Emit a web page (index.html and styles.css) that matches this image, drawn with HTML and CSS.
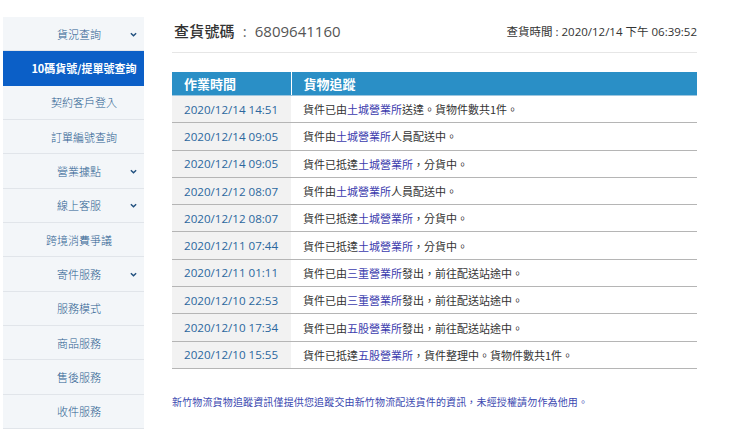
FILE: index.html
```html
<!DOCTYPE html>
<html lang="zh-Hant">
<head>
<meta charset="utf-8">
<title>貨況查詢</title>
<link rel="stylesheet" href="styles.css">
</head>
<body>
<div class="page">
  <nav class="side">
    <div class="item has-sub"><span class="label">貨況查詢</span><svg class="chev" viewBox="0 0 8 5" width="7" height="5"><path d="M1 1 L4 4 L7 1" fill="none" stroke="#1f4f7e" stroke-width="1.6"/></svg></div>
    <div class="item sub active"><span class="label">10碼貨號/提單號查詢</span></div>
    <div class="item sub"><span class="label">契約客戶登入</span></div>
    <div class="item sub"><span class="label">訂單編號查詢</span></div>
    <div class="item has-sub"><span class="label">營業據點</span><svg class="chev" viewBox="0 0 8 5" width="7" height="5"><path d="M1 1 L4 4 L7 1" fill="none" stroke="#1f4f7e" stroke-width="1.6"/></svg></div>
    <div class="item has-sub"><span class="label">線上客服</span><svg class="chev" viewBox="0 0 8 5" width="7" height="5"><path d="M1 1 L4 4 L7 1" fill="none" stroke="#1f4f7e" stroke-width="1.6"/></svg></div>
    <div class="item"><span class="label">跨境消費爭議</span></div>
    <div class="item has-sub"><span class="label">寄件服務</span><svg class="chev" viewBox="0 0 8 5" width="7" height="5"><path d="M1 1 L4 4 L7 1" fill="none" stroke="#1f4f7e" stroke-width="1.6"/></svg></div>
    <div class="item"><span class="label">服務模式</span></div>
    <div class="item"><span class="label">商品服務</span></div>
    <div class="item"><span class="label">售後服務</span></div>
    <div class="item"><span class="label">收件服務</span></div>
  </nav>

  <main class="main">
    <div class="head">
      <h1 class="title"><span class="title-label">查貨號碼</span><span class="colon">:</span><span class="number">6809641160</span></h1>
      <div class="qtime"><span class="qlabel">查貨時間</span> : 2020/12/14 下午 06:39:52</div>
    </div>

    <table class="track">
      <thead>
        <tr><th class="c-time">作業時間</th><th>貨物追蹤</th></tr>
      </thead>
      <tbody>
        <tr><td class="c-time">2020/12/14 14:51</td><td>貨件已由<a>土城營業所</a>送達。貨物件數共1件。</td></tr>
        <tr><td class="c-time">2020/12/14 09:05</td><td>貨件由<a>土城營業所</a>人員配送中。</td></tr>
        <tr><td class="c-time">2020/12/14 09:05</td><td>貨件已抵達<a>土城營業所</a>，分貨中。</td></tr>
        <tr><td class="c-time">2020/12/12 08:07</td><td>貨件由<a>土城營業所</a>人員配送中。</td></tr>
        <tr><td class="c-time">2020/12/12 08:07</td><td>貨件已抵達<a>土城營業所</a>，分貨中。</td></tr>
        <tr><td class="c-time">2020/12/11 07:44</td><td>貨件已抵達<a>土城營業所</a>，分貨中。</td></tr>
        <tr><td class="c-time">2020/12/11 01:11</td><td>貨件已由<a>三重營業所</a>發出，前往配送站途中。</td></tr>
        <tr><td class="c-time">2020/12/10 22:53</td><td>貨件已由<a>三重營業所</a>發出，前往配送站途中。</td></tr>
        <tr><td class="c-time">2020/12/10 17:34</td><td>貨件已由<a>五股營業所</a>發出，前往配送站途中。</td></tr>
        <tr><td class="c-time">2020/12/10 15:55</td><td>貨件已抵達<a>五股營業所</a>，貨件整理中。貨物件數共1件。</td></tr>
      </tbody>
    </table>

    <p class="note">新竹物流貨物追蹤資訊僅提供您追蹤交由新竹物流配送貨件的資訊，未經授權請勿作為他用。</p>
  </main>
</div>
</body>
</html>
```

FILE: styles.css
```css
html, body {
  margin: 0;
  padding: 0;
  background: #ffffff;
}

body {
  font-family: "Open Sans", "Noto Sans CJK TC", sans-serif;
  color: #333333;
}

.page {
  display: flex;
  align-items: flex-start;
}

/* left navigation */
.side {
  width: 141px;
  margin: 17px 0 0 3px;
  background: #f3f6f9;
}

.item {
  position: relative;
  box-sizing: border-box;
  height: 34.33px;
  border-bottom: 1px solid #e1e5ea;
  display: flex;
  align-items: center;
  justify-content: center;
  padding-left: 11px;
  font-family: "Noto Sans CJK TC", sans-serif;
  font-size: 11px;
  font-weight: 300;
  color: #2a5d90;
}

.item.sub {
  padding-left: 21px;
}

.item.active {
  background: #0b5fc7;
  color: #ffffff;
  font-weight: 700;
  border-bottom-color: #0b5fc7;
}

.chev {
  position: absolute;
  right: 7px;
  top: 50%;
  margin-top: -2px;
}

/* content column */
.main {
  width: 525px;
  margin-left: 28px;
  padding-top: 20px;
}

.head {
  display: flex;
  justify-content: space-between;
  align-items: center;
  height: 22px;
  padding-bottom: 10px;
  border-bottom: 1px solid #e6e6e6;
}

.title {
  margin: 0 0 0 2px;
  font-size: 15px;
  font-weight: 500;
  display: flex;
  align-items: baseline;
  line-height: 22px;
}

.title-label {
  font-family: "Noto Sans CJK TC", sans-serif;
  color: #333333;
  letter-spacing: 0.2px;
}

.colon {
  font-family: "Open Sans", sans-serif;
  font-weight: 400;
  color: #666666;
  margin: 0 8px 0 8px;
}

.number {
  font-family: "Open Sans", sans-serif;
  font-size: 15px;
  font-weight: 400;
  color: #555555;
}

.qtime {
  font-size: 11.5px;
  color: #333333;
  font-family: "Open Sans", "Noto Sans CJK TC", sans-serif;
}

.qlabel {
  font-family: "Noto Sans CJK TC", sans-serif;
  font-size: 11.5px;
}

/* tracking table */
.track {
  width: 100%;
  margin-top: 19px;
  border-collapse: collapse;
}

.track th {
  background: #2a8fc6;
  color: #ffffff;
  font-family: "Noto Sans CJK TC", sans-serif;
  font-size: 13px;
  font-weight: 700;
  text-align: left;
  height: 23px;
  padding: 0 0 0 12px;
  border-left: 1px solid #ffffff;
  border-bottom: 1px solid #9dc6df;
}

.track th:first-child {
  border-left: none;
}

.track td {
  height: 26.3px;
  padding: 0 0 0 12px;
  border-bottom: 1px solid #b5b5b5;
  font-size: 11px;
  font-family: "Noto Sans CJK TC", sans-serif;
  color: #333333;
  letter-spacing: 0;
}

.track td.c-time {
  width: 107px;
  background: #f2f2f2;
  font-family: "Open Sans", sans-serif;
  font-size: 11.6px;
  color: #2b679e;
  letter-spacing: 0;
}

.track a {
  color: #3c3cae;
  text-decoration: none;
}

.note {
  margin: 25px 0 0 0;
  font-family: "Noto Sans CJK TC", sans-serif;
  font-size: 10px;
  letter-spacing: 0.15px;
  color: #3a48b0;
}
```
